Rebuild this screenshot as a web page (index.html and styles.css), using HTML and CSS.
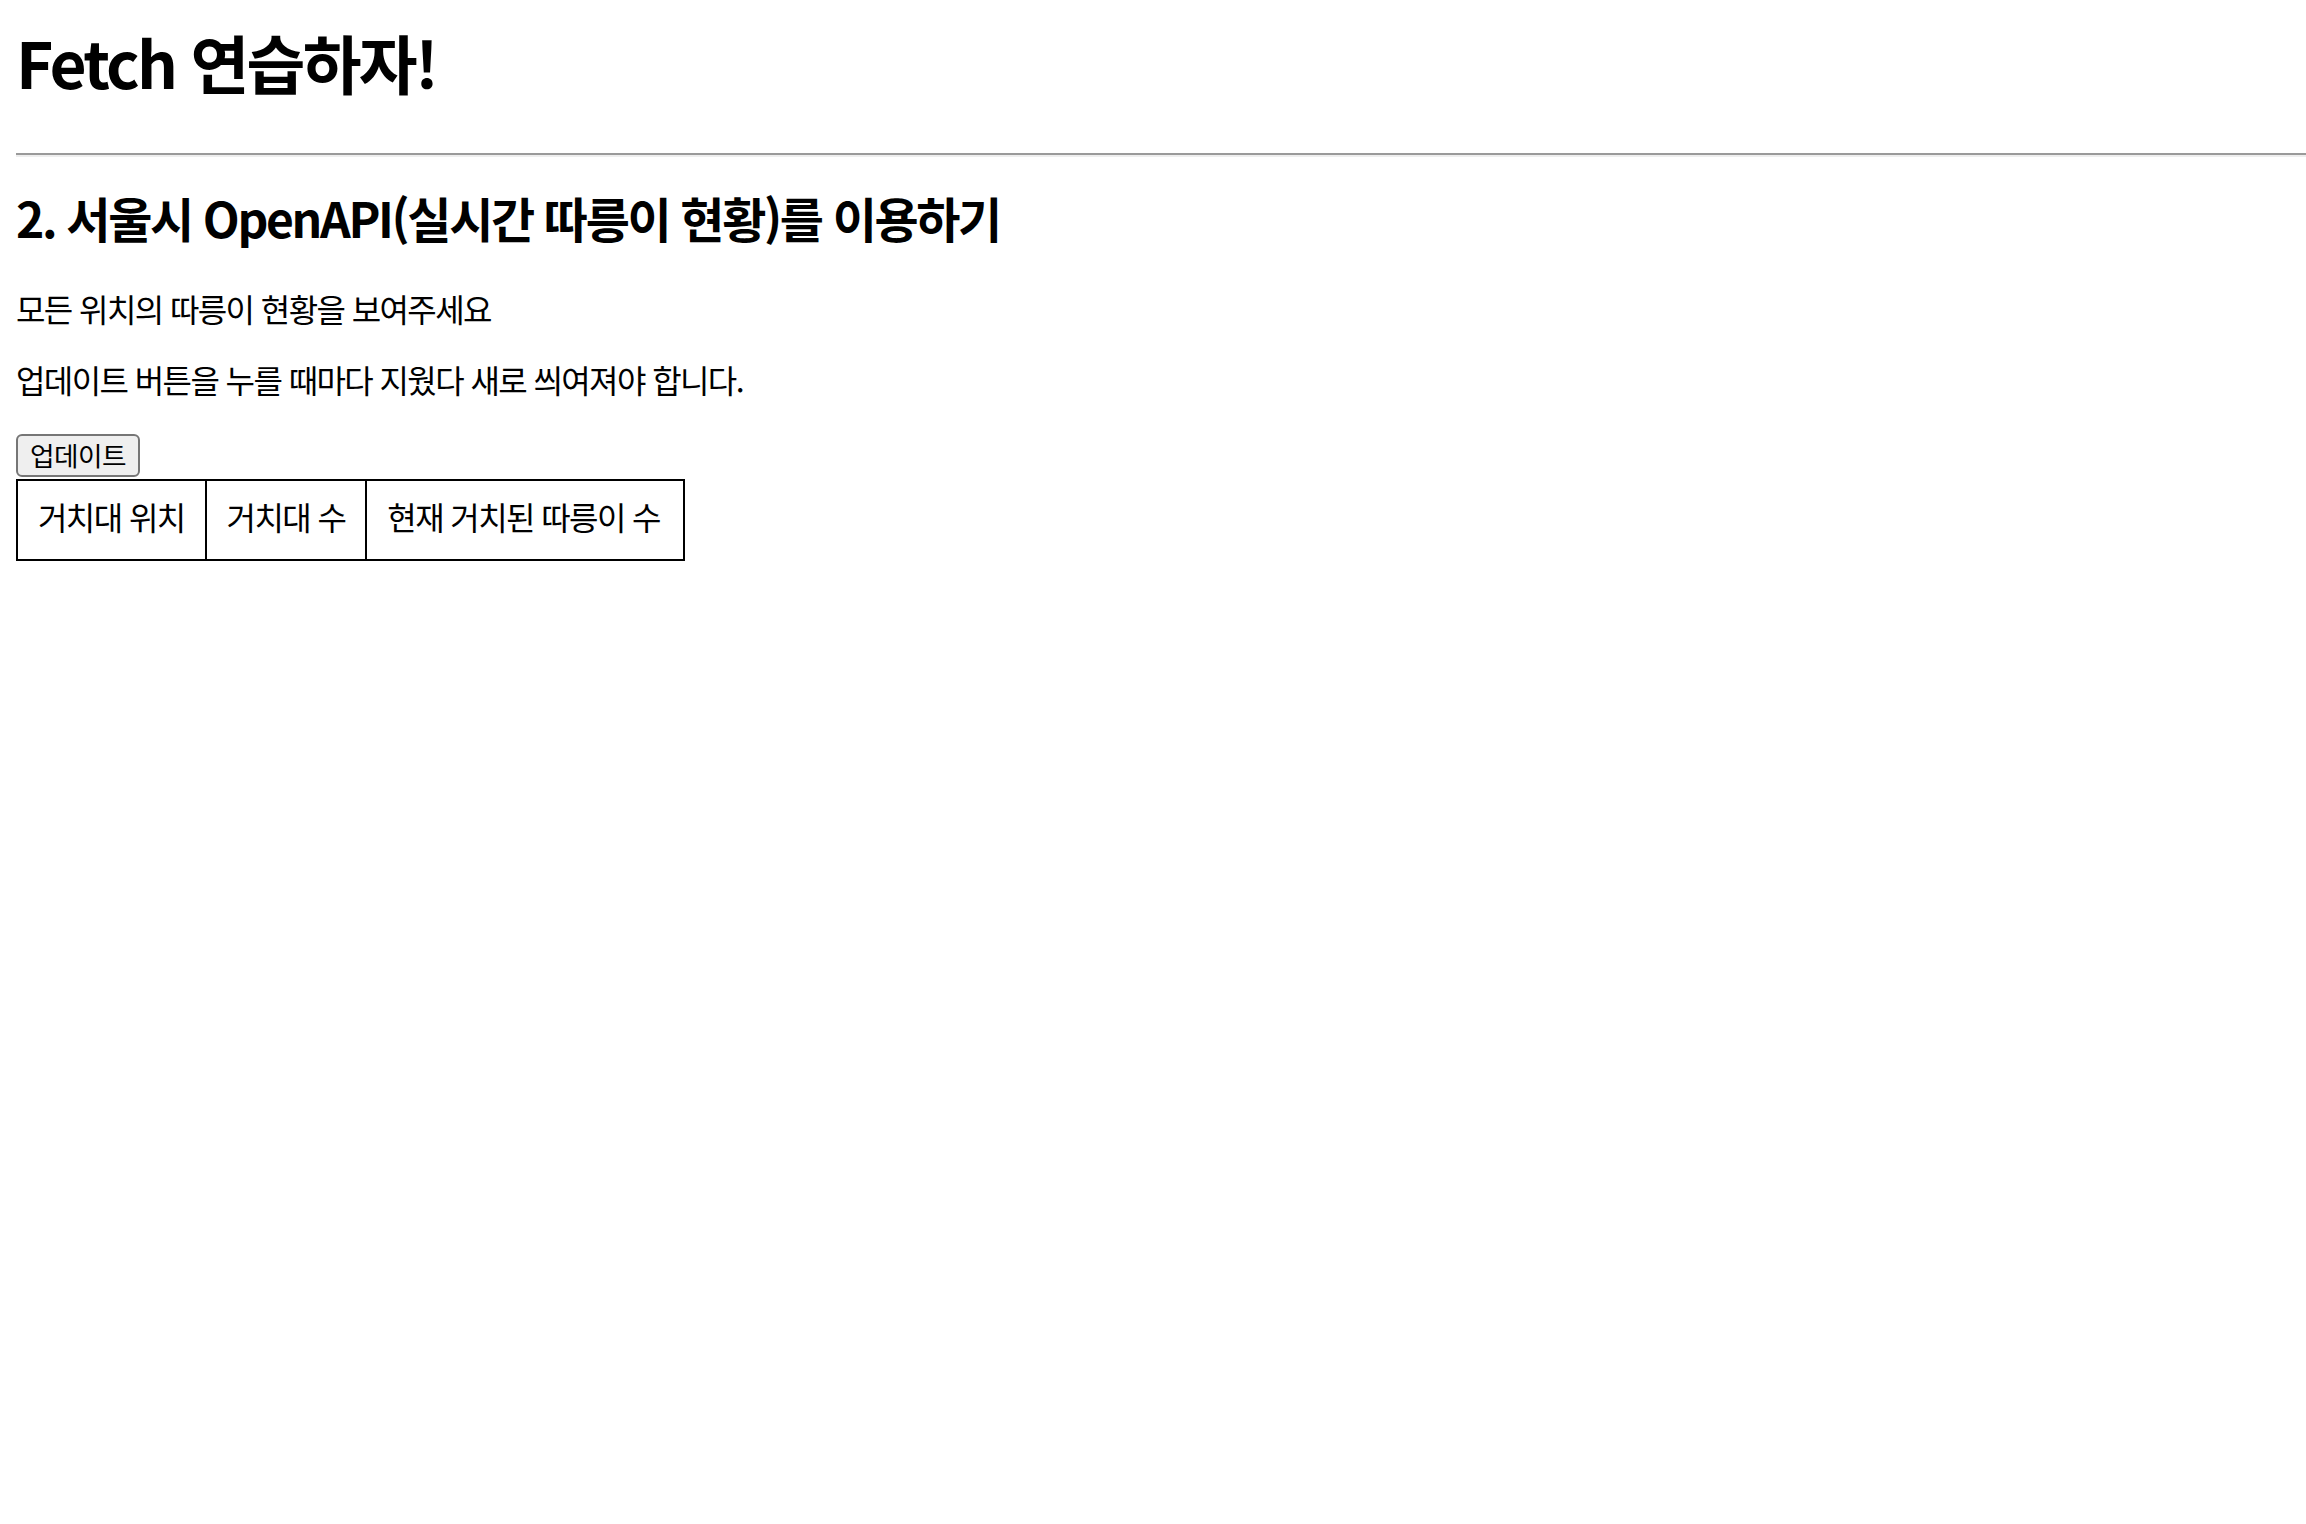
FILE: index.html
```html
<!DOCTYPE html>
<html lang="ko">
<head>
<meta charset="utf-8">
<title>Fetch 연습하자!</title>
<link rel="stylesheet" href="styles.css">
</head>
<body>
<main class="page">
  <h1 class="title">Fetch 연습하자!</h1>
  <hr class="divider">
  <h2 class="subtitle">2. 서울시 OpenAPI(실시간 따릉이 현황)를 이용하기</h2>
  <p class="desc desc-first">모든 위치의 따릉이 현황을 보여주세요</p>
  <p class="desc desc-second">업데이트 버튼을 누를 때마다 지웠다 새로 씌여져야 합니다.</p>
  <button class="update-btn" type="button">업데이트</button>
  <table class="bike-table">
    <tr>
      <td class="cell">거치대 위치</td>
      <td class="cell">거치대 수</td>
      <td class="cell">현재 거치된 따릉이 수</td>
    </tr>
  </table>
</main>
</body>
</html>
```

FILE: styles.css
```css
html, body {
  margin: 0;
  padding: 0;
  background: #ffffff;
}

body {
  font-family: "Noto Sans CJK KR", "Noto Sans", sans-serif;
  color: #000000;
  font-size: 32px;
  line-height: 1.2;
}

.page {
  padding: 0 16px;
  display: flow-root;
}

.title {
  font-size: 64px;
  font-weight: 700;
  line-height: 76.8px;
  letter-spacing: -0.043em;
  margin: 23px 0 0;
}

.divider {
  margin: 53px -16px 0 0;
  height: 0;
  border: 0;
  border-top: 2px solid #9a9a9a;
  border-bottom: 2px solid #eeeeee;
}

.subtitle {
  font-size: 48px;
  font-weight: 700;
  line-height: 57.6px;
  letter-spacing: -0.049em;
  margin: 32px 0 0;
}

.desc {
  font-size: 32px;
  line-height: 38.4px;
  letter-spacing: -0.05em;
  margin: 0;
}

.desc-first {
  margin-top: 43px;
}

.desc-second {
  margin-top: 32.5px;
}

.update-btn {
  display: block;
  margin: 35px 0 0;
  height: 43px;
  padding: 0 12px;
  font-family: inherit;
  font-size: 26.67px;
  line-height: 1;
  letter-spacing: -0.02em;
  color: #000000;
  background: #efefef;
  border: 2px solid #767676;
  border-radius: 6px;
}

.bike-table {
  margin-top: 2px;
  border-collapse: collapse;
  border: 2px solid #000000;
}

.cell {
  border: 2px solid #000000;
  padding: 16px 20px 24px;
  font-size: 32px;
  line-height: 38.4px;
  letter-spacing: -0.05em;
}

.cell:last-child {
  padding-right: 23px;
}
```
